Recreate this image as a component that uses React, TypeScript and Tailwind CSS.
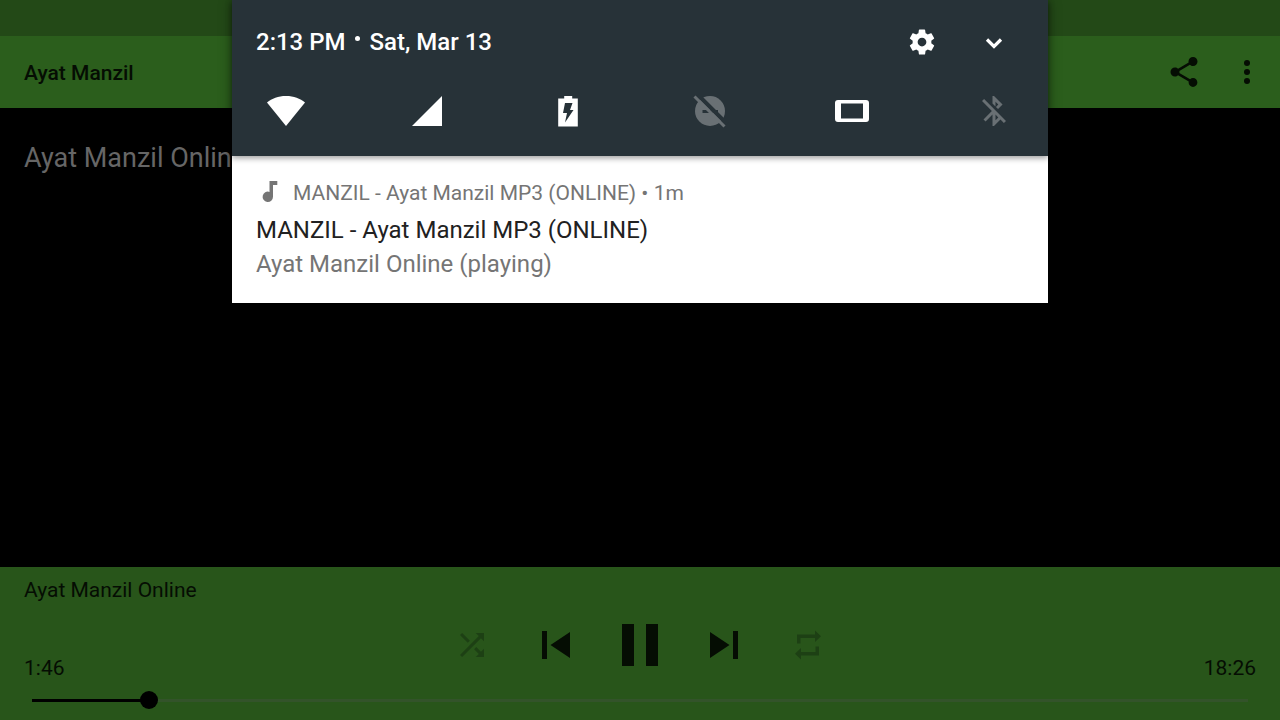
import { useState } from 'react'

function PlayerBar() {
  const [position, setPosition] = useState(106)
  const duration = 1106
  const played = (position / duration) * 100

  return (
    <footer className="relative bg-[#28551a] text-[#050d03] h-[153px] px-6 pt-2">
      <p className="text-[21px] leading-[30px]">Ayat Manzil Online</p>

      {/* Transport buttons */}
      <div className="flex items-center justify-center gap-6 h-20">
        <button aria-label="Shuffle" className="w-[60px] flex justify-center text-[#1d4014]">
          <svg className="size-9" viewBox="0 0 24 24" fill="currentColor">
            <path d="M10.59 9.17L5.41 4 4 5.41l5.17 5.17 1.42-1.41zM14.5 4l2.04 2.04L4 18.59 5.41 20 17.96 7.46 20 9.5V4h-5.5zm.33 9.41l-1.41 1.41 3.13 3.13L14.5 20H20v-5.5l-2.04 2.04-3.13-3.13z" />
          </svg>
        </button>
        <button aria-label="Previous" className="w-[60px] flex justify-center">
          <svg className="size-7" viewBox="0 0 28 28" fill="currentColor">
            <path d="M0 0h5v28H0zM28 1v26L8.5 14z" />
          </svg>
        </button>
        <button aria-label="Pause" className="w-[60px] flex justify-center">
          <svg className="w-9 h-[42px]" viewBox="0 0 36 42" fill="currentColor">
            <path d="M0 0h12v42H0zM24 0h12v42H24z" />
          </svg>
        </button>
        <button aria-label="Next" className="w-[60px] flex justify-center">
          <svg className="size-7" viewBox="0 0 28 28" fill="currentColor">
            <path d="M23 0h5v28h-5zM0 1v26l19.5-13z" />
          </svg>
        </button>
        <button aria-label="Repeat" className="w-[60px] flex justify-center text-[#1d4014]">
          <svg className="size-9" viewBox="0 0 36 36" fill="currentColor">
            <path d="M7 7.5h18v-4l6 5.7-6 5.8v-4H10.5v5.5H7zM29 28.5H11v4l-6-5.7 6-5.8v4h14.5v-5.5H29z" />
          </svg>
        </button>
      </div>

      <div className="absolute inset-x-6 bottom-1">
        <div className="flex justify-between text-[21px] leading-6">
          <span>1:46</span>
          <span>18:26</span>
        </div>
        <div className="relative h-8 mx-2 mt-1 flex items-center">
          <div className="w-full h-[3px] bg-[#33532a]">
            <div className="h-full bg-black" style={{ width: `${played}%` }} />
          </div>
          <div
            className="absolute size-[18px] -ml-[9px] rounded-full bg-black"
            style={{ left: `${played}%` }}
          />
          <input
            type="range"
            aria-label="Playback position"
            min={0}
            max={duration}
            value={position}
            onChange={(e) => setPosition(Number(e.target.value))}
            className="absolute inset-0 w-full h-full opacity-0"
          />
        </div>
      </div>
    </footer>
  )
}

function QuickSettings() {
  return (
    <div className="relative bg-[#273238] text-white h-39 px-6 shadow-[0_2px_6px_rgba(0,0,0,0.4)]">
      <div className="flex items-center h-[84px]">
        <p className="flex-1 flex text-2xl font-medium">
          <span>2:13 PM</span>
          <span className="w-6 flex justify-center pt-[10px]">
            <span className="size-[5px] rounded-full bg-white" />
          </span>
          <span>Sat, Mar 13</span>
        </p>
        <button aria-label="Settings" className="w-[72px] flex justify-center">
          <svg className="size-[30px]" viewBox="0 0 24 24" fill="currentColor">
            <path d="M19.43 12.98c.04-.32.07-.64.07-.98s-.03-.66-.07-.98l2.11-1.65c.19-.15.24-.42.12-.64l-2-3.46c-.12-.22-.39-.3-.61-.22l-2.49 1c-.52-.4-1.08-.73-1.69-.98l-.38-2.65C14.46 2.18 14.25 2 14 2h-4c-.25 0-.46.18-.49.42l-.38 2.65c-.61.25-1.17.59-1.69.98l-2.49-1c-.23-.09-.49 0-.61.22l-2 3.46c-.13.22-.07.49.12.64l2.11 1.65c-.04.32-.07.65-.07.98s.03.66.07.98l-2.11 1.65c-.19.15-.24.42-.12.64l2 3.46c.12.22.39.3.61.22l2.49-1c.52.4 1.08.73 1.69.98l.38 2.65c.03.24.24.42.49.42h4c.25 0 .46-.18.49-.42l.38-2.65c.61-.25 1.17-.59 1.69-.98l2.49 1c.23.09.49 0 .61-.22l2-3.46c.12-.22.07-.49-.12-.64l-2.11-1.65zM12 15.5c-1.93 0-3.5-1.57-3.5-3.5s1.57-3.5 3.5-3.5 3.5 1.57 3.5 3.5-1.57 3.5-3.5 3.5z" />
          </svg>
        </button>
        <button aria-label="Expand" className="w-[72px] -mr-[6px] flex justify-center">
          <svg className="size-9" viewBox="0 0 36 36" fill="none" stroke="currentColor" strokeWidth="3.2">
            <path d="M11 15.5l7 7 7-7" />
          </svg>
        </button>
      </div>

      {/* Tiles */}
      <div className="flex justify-between px-[6px] pt-[3px]">
        <button aria-label="Wi-Fi">
          <svg className="size-12" viewBox="0 0 48 48" fill="currentColor">
            <path d="M24 39L5 15.5C10 11.5 16 9 24 9s14 2.5 19 6.5z" />
          </svg>
        </button>
        <button aria-label="Mobile data">
          <svg className="size-12" viewBox="0 0 48 48" fill="currentColor">
            <path d="M8 39L38 9v30z" />
          </svg>
        </button>
        <button aria-label="Battery">
          <svg className="size-12" viewBox="0 0 48 48" fill="currentColor">
            <path d="M13.2 11.5h6V9h8v2.5h5.6v28H13.2z" />
            <path fill="#273238" d="M20 16h7.5l-2.5 7h3.5l-8.500 12.500 2-9.500H18z" />
          </svg>
        </button>
        <button aria-label="Do not disturb" className="text-[#697074]">
          <svg className="size-12" viewBox="0 0 48 48">
            <circle cx="23" cy="24" r="15" fill="currentColor" />
            <path d="M15.500 24.500h15.500" stroke="#273238" strokeWidth="3" />
            <path d="M11 8l29 29" stroke="#273238" strokeWidth="4" />
            <path d="M7.500 9.500l30 30" stroke="currentColor" strokeWidth="3" />
          </svg>
        </button>
        <button aria-label="Rotation">
          <svg className="size-12" viewBox="0 0 48 48" fill="currentColor" fillRule="evenodd">
            <path d="M10 13h28a3 3 0 0 1 3 3v16a3 3 0 0 1-3 3H10a3 3 0 0 1-3-3V16a3 3 0 0 1 3-3zM13 16.500v15h22v-15z" />
          </svg>
        </button>
        <button aria-label="Bluetooth" className="text-[#697074]">
          <svg className="size-12" viewBox="0 0 48 48">
            <g transform="translate(6 6) scale(1.5)" fill="currentColor">
              <path d="M13 5.83l1.88 1.88-1.6 1.6 1.41 1.41 3.02-3.02L12 2h-1v5.03l2 2v-3.2zM5.41 4L4 5.41 10.59 12 5 17.59 6.41 19 11 14.41V22h1l4.29-4.29 2.3 2.29L20 18.59 5.41 4zM13 18.17v-3.76l1.88 1.88L13 18.17z" />
            </g>
          </svg>
        </button>
      </div>
    </div>
  )
}

export default function App() {
  return (
    <div className="relative min-h-screen flex flex-col overflow-hidden bg-black font-[Roboto,sans-serif]">
      {/* Status bar */}
      <div className="h-9 bg-[#234917]" />

      <header className="h-[72px] bg-[#2b5e1c] text-[#050d03] flex items-center pl-6 pr-[15px]">
        <h1 className="flex-1 pt-[3px] text-[21px] font-medium">Ayat Manzil</h1>
        <button aria-label="Share" className="mr-[27px]">
          <svg className="size-9" viewBox="0 0 24 24" fill="currentColor">
            <path d="M18 16.08c-.76 0-1.44.3-1.96.77L8.91 12.7c.05-.23.09-.46.09-.7s-.04-.47-.09-.7l7.05-4.11c.54.5 1.25.81 2.04.81 1.66 0 3-1.34 3-3s-1.34-3-3-3-3 1.34-3 3c0 .24.04.47.09.7L8.04 9.81C7.5 9.31 6.79 9 6 9c-1.66 0-3 1.34-3 3s1.34 3 3 3c.79 0 1.5-.31 2.04-.81l7.12 4.16c-.05.21-.08.43-.08.65 0 1.61 1.31 2.92 2.92 2.92s2.92-1.31 2.92-2.92-1.31-2.92-2.92-2.92z" />
          </svg>
        </button>
        <button aria-label="More options">
          <svg className="size-9" viewBox="0 0 24 24" fill="currentColor">
            <circle cx="12" cy="6" r="2" />
            <circle cx="12" cy="12" r="2" />
            <circle cx="12" cy="18" r="2" />
          </svg>
        </button>
      </header>

      <main className="flex-1 px-6 pt-8">
        <p className="text-[27px] leading-9 text-[#666]">Ayat Manzil Online</p>
      </main>

      <PlayerBar />

      {/* Notification shade */}
      <section className="absolute top-0 left-1/2 -translate-x-1/2 w-[816px] max-w-full bg-white shadow-[0_0_12px_rgba(0,0,0,0.4)]">
        <QuickSettings />
        <article className="px-6 pt-[21px] pb-[22px]">
          <div className="flex items-center text-[21px] leading-8 text-[#757575]">
            <svg className="size-[27px] mr-[10px]" viewBox="0 0 27 27" fill="currentColor">
              <path d="M13.5 1v10.900A5.200 5.200 0 1 0 17 16.800V5h4.300V1z" />
            </svg>
            <span>MANZIL - Ayat Manzil MP3 (ONLINE) • 1m</span>
          </div>
          <h2 className="pt-1 text-2xl leading-[34px] text-[#212121]">MANZIL - Ayat Manzil MP3 (ONLINE)</h2>
          <p className="text-2xl leading-[34px] text-[#757575]">Ayat Manzil Online (playing)</p>
        </article>
      </section>
    </div>
  )
}
